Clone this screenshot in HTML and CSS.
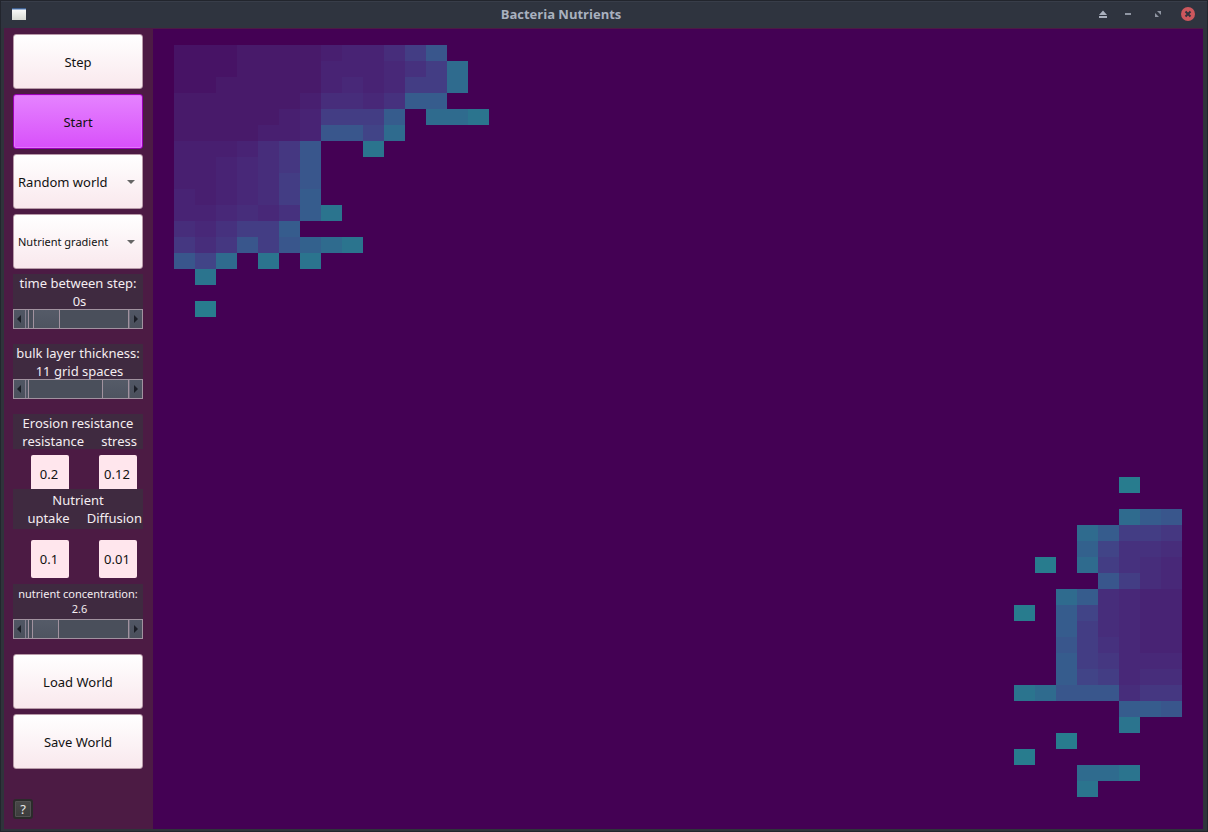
FILE: index.html
```html
<!DOCTYPE html>
<html lang="en">
<head>
<meta charset="utf-8">
<meta name="viewport" content="width=device-width, initial-scale=1">
<title>Bacteria Nutrients</title>
<link rel="stylesheet" href="styles.css">
</head>
<body>
<div class="window">
  <header class="titlebar">
    <svg class="app-icon" width="16" height="14" viewBox="0 0 16 14" aria-hidden="true">
      <defs><linearGradient id="pane" x1="0" y1="0" x2="0" y2="1"><stop offset="0" stop-color="#fff"/><stop offset="1" stop-color="#d8dad4"/></linearGradient></defs>
      <rect x="1" y="1" width="14" height="12" fill="url(#pane)"/>
      <rect x="1" y="1" width="14" height="1" fill="#3e5f8f"/>
      <rect x="1" y="2" width="14" height="1" fill="#9db4d6"/>
    </svg>
    <h1 class="title">Bacteria Nutrients</h1>
    <div class="window-controls">
      <button class="window-button" type="button" aria-label="Shade">
        <svg width="16" height="16" viewBox="0 0 16 16"><path d="M8 4.500L12 9H4zM4 10h8v2H4z" fill="#aab0bd"/></svg>
      </button>
      <div class="window-sizing">
        <button class="window-button" type="button" aria-label="Minimize">
          <svg width="16" height="16" viewBox="0 0 16 16"><path d="M5 7h6v2H5z" fill="#9096a3"/></svg>
        </button>
        <button class="window-button" type="button" aria-label="Maximize">
          <svg width="16" height="16" viewBox="0 0 16 16"><path d="M7 5h4v4zM5 7v4h4z" fill="#9096a3"/></svg>
        </button>
        <button class="window-button" type="button" aria-label="Close">
          <svg width="16" height="16" viewBox="0 0 16 16"><circle cx="8" cy="8" r="7" fill="#cc575d"/><path d="M5.500 5.500l5 5M10.500 5.500l-5 5" stroke="#2f343f" stroke-width="2"/></svg>
        </button>
      </div>
    </div>
  </header>

  <div class="content">
    <aside class="sidebar">
      <button class="button" type="button">Step</button>
      <button class="button button-active" type="button">Start</button>
      <div class="dropdown">
        <select class="dropdown-select" aria-label="World"><option>Random world</option></select>
      </div>
      <div class="dropdown dropdown-small">
        <select class="dropdown-select" aria-label="Display"><option>Nutrient gradient</option></select>
      </div>

      <div class="slider-group">
        <label class="caption" for="delay">time between step:<span class="caption-value">0s</span></label>
        <div class="scrollbar">
          <button class="arrow arrow-left" type="button" aria-label="Less time"></button>
          <input class="range" id="delay" type="range" min="0" max="100" value="6">
          <button class="arrow arrow-right" type="button" aria-label="More time"></button>
        </div>
      </div>

      <div class="slider-group">
        <label class="caption" for="bulk">bulk layer thickness:<span class="caption-value">11 grid spaces</span></label>
        <div class="scrollbar">
          <button class="arrow arrow-left" type="button" aria-label="Thinner layer"></button>
          <input class="range" id="bulk" type="range" min="0" max="100" value="100">
          <button class="arrow arrow-right" type="button" aria-label="Thicker layer"></button>
        </div>
      </div>

      <div class="field-group">
        <div class="caption">Erosion resistance
          <div class="caption-pair caption-pair-inset"><label for="resistance">resistance</label><label for="stress">stress</label></div>
        </div>
        <div class="fields fields-clipped">
          <input class="field" id="resistance" type="text" value="0.2">
          <input class="field" id="stress" type="text" value="0.12">
        </div>
        <div class="caption caption-tall">Nutrient
          <div class="caption-pair"><label for="uptake">uptake</label><label for="diffusion">Diffusion</label></div>
        </div>
        <div class="fields fields-low">
          <input class="field" id="uptake" type="text" value="0.1">
          <input class="field" id="diffusion" type="text" value="0.01">
        </div>
      </div>

      <div class="slider-group">
        <label class="caption caption-small" for="concentration">nutrient concentration:<span class="caption-value">2.6</span></label>
        <div class="scrollbar">
          <button class="arrow arrow-left" type="button" aria-label="Lower concentration"></button>
          <input class="range" id="concentration" type="range" min="0" max="100" value="4">
          <button class="arrow arrow-right" type="button" aria-label="Higher concentration"></button>
        </div>
      </div>

      <button class="button" type="button">Load World</button>
      <button class="button" type="button">Save World</button>
      <button class="help" type="button" aria-label="Help">?</button>
    </aside>

    <main class="stage">
      <svg class="world" id="world" viewBox="0 0 50 50" preserveAspectRatio="none" shape-rendering="crispEdges" role="img" aria-label="Nutrient gradient of the bacteria world"></svg>
    </main>
  </div>
</div>
<script src="world.js"></script>
</body>
</html>
```

FILE: styles.css
```css
* { box-sizing: border-box; }

body {
  margin: 0;
  font-family: "Noto Sans", "Open Sans", sans-serif;
  font-size: 13px;
  line-height: 18px;
  background: #2f343f;
}

button, input, select { font: inherit; margin: 0; padding: 0; }

.window {
  display: flex;
  flex-direction: column;
  min-height: 100vh;
  border: 1px solid #22252d;
  background: #2f343b;
}

.titlebar {
  display: flex;
  align-items: center;
  height: 27px;
  flex: none;
  padding: 0 11px 1px 10px;
  background: #2f343f;
  box-shadow: inset 0 1px #383d49;
}

.title {
  flex: 1;
  margin: 0;
  font-size: 13px;
  line-height: 18px;
  font-weight: 700;
  font-family: "Open Sans", "Noto Sans", sans-serif;
  text-align: center;
  color: #a9b1bf;
}
.window-controls { display: flex; gap: 9px; }
.window-sizing { display: flex; gap: 14px; }
.window-button { display: flex; width: 16px; height: 16px; border: 0; background: none; }

.content { display: flex; flex: 1; padding: 0 4px 2px 3px; }

.sidebar {
  display: flex;
  flex-direction: column;
  gap: 5px;
  width: 149px;
  flex: none;
  padding: 6px 10px 10px 9px;
  background: #4c1b44;
}

.button, .dropdown-select {
  width: 100%;
  height: 55px;
  flex: none;
  border: 1px solid #b79aa8;
  border-radius: 3px;
  color: #111;
  background: linear-gradient(#fff, #f9e8ed);
}

.button-active {
  border-color: #9a00b8;
  background: linear-gradient(#e583ff, #d850fa);
  box-shadow: inset 0 0 0 1px #e275fb;
}

.dropdown { position: relative; height: 55px; flex: none; }
.dropdown-select { appearance: none; padding: 0 20px 0 4px; }
.dropdown-small { font-size: 11px; }
.dropdown::after {
  content: "";
  position: absolute;
  right: 8px;
  top: 26px;
  border: 4px solid transparent;
  border-top-color: #666;
  border-bottom: 0;
  pointer-events: none;
}

.slider-group { margin-bottom: 10px; }

.caption {
  display: block;
  height: 35px;
  text-align: center;
  color: #f4edf1;
  background: #3f2a40;
}
.caption-value { display: block; padding-left: 3px; }
.caption-small { padding-top: 2px; font-size: 11px; line-height: 15px; }
.caption-tall { height: 40px; padding-top: 2px; }
.caption-pair { display: flex; justify-content: flex-end; gap: 17px; padding-right: 1px; }
.caption-pair-inset { padding-right: 6px; }

.scrollbar {
  display: flex;
  height: 20px;
  border: 1px solid #a1929f;
  background: #4a4f5b;
}

.arrow {
  display: flex;
  align-items: center;
  width: 15px;
  flex: none;
  border: 0;
  background: linear-gradient(#505664, #4b505c);
}
.arrow::before { content: ""; border: 4px solid transparent; }
.arrow-left { padding-left: 3px; border-right: 1px solid #a1929f; box-shadow: inset -2px 0 #505664, inset -3px 0 #86808f; }
.arrow-left::before { border-left: 0; border-right-color: #1b1e26; }
.arrow-right { width: 14px; padding-left: 5px; border-left: 1px solid #a1929f; box-shadow: inset 1px 0 #6d6c7a; }
.arrow-right::before { border-right: 0; border-left-color: #1b1e26; }

.range { appearance: none; flex: 1; min-width: 0; height: 18px; margin-right: -1px; background: none; }
.range::-webkit-slider-thumb {
  appearance: none;
  width: 27px;
  height: 18px;
  border: solid #a1929f;
  border-width: 0 1px;
  background: linear-gradient(#555b68, #4e5460);
}

.fields { display: flex; gap: 30px; padding: 6px 6px 0 18px; }
.fields-clipped { height: 40px; overflow: hidden; }
.fields-low { padding-top: 11px; }
.field {
  width: 38px;
  height: 38px;
  flex: none;
  border: 0;
  border-radius: 2px;
  padding-right: 2px;
  text-align: center;
  color: #111;
  background: #ffe6ed;
}
.field-group { padding-bottom: 1px; }

.help {
  width: 20px;
  height: 20px;
  margin-top: auto;
  border: 2px solid #2b2b2b;
  border-radius: 3px;
  color: #e8e8e8;
  line-height: 16px;
  background: linear-gradient(#484848, #3c3c3c);
  box-shadow: inset 0 0 0 1px #525252;
}

.stage {
  flex: 1;
  min-width: 0;
  contain: size;
  padding-top: 1px;
  background: linear-gradient(#4c1b44 1px, #440154 1px);
}
.world { display: block; width: 100%; height: 100%; }
```

FILE: world.js
```js
// One letter per cell, from depleted (a) to nearly saturated (q); a dot is empty medium.
const palette = {
  a: "#471365", b: "#481a6a", c: "#481f70", d: "#482374", e: "#482878",
  f: "#472d7b", g: "#46317e", h: "#453781", i: "#433d84", j: "#414487",
  k: "#39568c", l: "#365c8d", m: "#33618d", n: "#2f6b8e", o: "#2b748e",
  q: "#287c8e"
};

// [row, first column, cells]
const runs = [
  [1, 1, "aaabbbbcddfik"],
  [2, 1, "aaabbbbdddegin"],
  [3, 1, "aabbbbbdedeiin"],
  [4, 1, "bbbbbbcffegll"],
  [5, 1, "bbbbbcdiiil.nno"],
  [6, 1, "bbbbccdkkjn"],
  [7, 1, "cccdfhk..o"],
  [8, 1, "ccdefhk"],
  [9, 1, "ccdefik"],
  [10, 1, "dcdefil"],
  [11, 1, "ddefeglo"],
  [12, 1, "fegiil"],
  [13, 1, "hfhkikmno"],
  [14, 1, "kjn.o.o"],
  [15, 2, "o"],
  [17, 2, "q"],
  [28, 46, "q"],
  [30, 46, "nlk"],
  [31, 44, "nliih"],
  [32, 44, "mjggf"],
  [33, 42, "q.nigfe"],
  [34, 45, "kife"],
  [35, 43, "nlfedd"],
  [36, 41, "q.ljfedd"],
  [37, 43, "lifedd"],
  [38, 43, "kigedd"],
  [39, 43, "liheee"],
  [40, 43, "ljieff"],
  [41, 41, "onkkkfhh"],
  [42, 46, "llk"],
  [43, 46, "o"],
  [44, 43, "q"],
  [45, 41, "q"],
  [46, 44, "nno"],
  [47, 44, "o"]
];

const world = document.getElementById("world");
for (const [row, column, cells] of runs) {
  [...cells].forEach((cell, i) => {
    if (cell === ".") return;
    const rect = document.createElementNS("http://www.w3.org/2000/svg", "rect");
    rect.setAttribute("x", column + i);
    rect.setAttribute("y", row);
    rect.setAttribute("width", 1);
    rect.setAttribute("height", 1);
    rect.setAttribute("fill", palette[cell]);
    world.append(rect);
  });
}
```
